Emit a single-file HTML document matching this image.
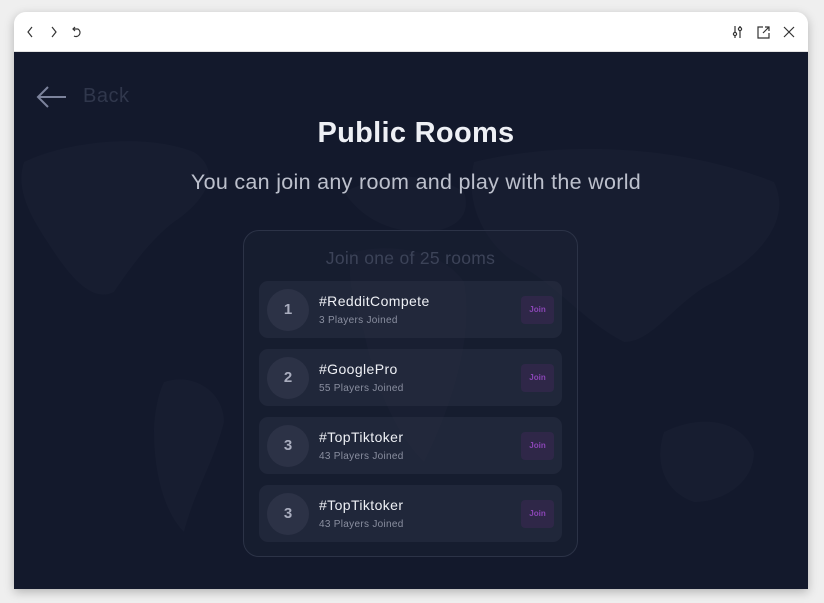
<!DOCTYPE html>
<html><head><style>
*{margin:0;padding:0;box-sizing:border-box}
body{width:824px;height:603px;background:#efefef;position:relative;overflow:hidden;font-family:"Liberation Sans",sans-serif}
.win{position:absolute;left:14px;top:12px;width:794px;height:577px;border-radius:12px 12px 0 0;overflow:hidden;box-shadow:0 3px 10px rgba(0,0,0,.25)}
.bar{height:40px;background:#fff;border-bottom:1px solid #e3e3e3;position:relative}
.main{position:absolute;top:40px;left:0;right:0;bottom:0;background:#13192c}
.t{position:absolute;left:0;right:0;text-align:center;white-space:nowrap}
.box{position:absolute;left:229px;top:178px;width:335px;height:327px;border:1px solid #2c3347;border-radius:16px;background:rgba(30,36,55,.35)}
.row{position:absolute;left:15px;width:303px;height:57px;border-radius:9px;background:rgba(42,48,68,.55)}
.c{position:absolute;left:8px;top:8px;width:42px;height:42px;border-radius:50%;background:#2c3246;color:#a9adbe;font-weight:bold;font-size:15px;text-align:center;line-height:42px}
.n{position:absolute;left:60px;top:12px;color:#eef0f5;font-size:14px;letter-spacing:.4px}
.p{position:absolute;left:60px;top:34px;color:#8a8fa0;font-size:10px;letter-spacing:.3px}
.j{position:absolute;left:262px;top:15px;width:33px;height:28px;border-radius:4px;background:#2f2748;color:#8a45b5;font-size:8px;font-weight:bold;text-align:center;line-height:28px}
</style></head><body>
<div class="win">
<div class="bar">
<svg width="80" height="40" style="position:absolute;left:0;top:0" fill="none" stroke="#333" stroke-width="1.2">
<path d="M18 15l-4 5 4 5"/><path d="M38 15l4 5-4 5"/>
<path d="M61 15l-2 2 2 2M59 17h5a4 4 0 1 1-4 7"/>
</svg>
<svg width="70" height="40" style="position:absolute;left:716px;top:0" fill="none" stroke="#333" stroke-width="1.2">
<path d="M5 14v12M10 14v12"/><circle cx="5" cy="22" r="1.6" fill="#fff"/><circle cx="10" cy="17" r="1.6" fill="#fff"/>
<path d="M33 15h-5v11h11v-5M33 21l6-6M35 15h4v4"/>
<path d="M54 15l10 10M64 15l-10 10"/>
</svg>
</div>
<div class="main">
<svg width="794" height="537" style="position:absolute;left:0;top:0" fill="#171d30">
<path d="M10 110c40-20 120-30 170-10 30 20 10 50-20 70-20 15-40 40-60 70-20 10-40-10-60-40-20-30-40-60-30-90z"/>
<path d="M150 330c30-10 60 10 60 40-10 40-30 70-40 110-20-20-30-60-30-100 0-20 5-40 10-50z"/>
<path d="M330 140c40-20 90-20 120 0 10 30-20 40-40 40-30 0-60-10-80-40z"/>
<path d="M340 200c40-10 90 0 110 30 10 50-10 120-40 180-30-30-50-80-60-130-10-30-20-60-10-80z"/>
<path d="M460 110c80-20 200-20 300 20 20 40-20 80-60 100-40 20-60 60-90 60-40-20-70-60-110-80-30-20-50-60-40-100z"/>
<path d="M650 380c40-20 80-10 90 20 0 30-30 50-60 50-30-10-40-40-30-70z"/>
</svg>
<svg width="40" height="24" style="position:absolute;left:22px;top:33px" fill="none" stroke="#7c839c" stroke-width="2"><path d="M30 12H2M12 2L2 12l10 10"/></svg>
<div style="position:absolute;left:69px;top:33px;color:#30374c;font-size:20px;letter-spacing:.5px">Back</div>
<div class="t" style="top:65px;left:10px;color:#eef0f5;font-size:29px;font-weight:bold;letter-spacing:.3px">Public Rooms</div>
<div class="t" style="top:118px;left:10px;color:#bcc0cc;font-size:21.5px;letter-spacing:.3px">You can join any room and play with the world</div>
<div class="box">
<div class="t" style="top:17px;color:#3c4358;font-size:17.5px;letter-spacing:.3px">Join one of 25 rooms</div>
<div class="row" style="top:50px"><div class="c">1</div><div class="n">#RedditCompete</div><div class="p">3 Players Joined</div><div class="j">Join</div></div>
<div class="row" style="top:118px"><div class="c">2</div><div class="n">#GooglePro</div><div class="p">55 Players Joined</div><div class="j">Join</div></div>
<div class="row" style="top:186px"><div class="c">3</div><div class="n">#TopTiktoker</div><div class="p">43 Players Joined</div><div class="j">Join</div></div>
<div class="row" style="top:254px"><div class="c">3</div><div class="n">#TopTiktoker</div><div class="p">43 Players Joined</div><div class="j">Join</div></div>
</div>
</div>
</div>
</body></html>
